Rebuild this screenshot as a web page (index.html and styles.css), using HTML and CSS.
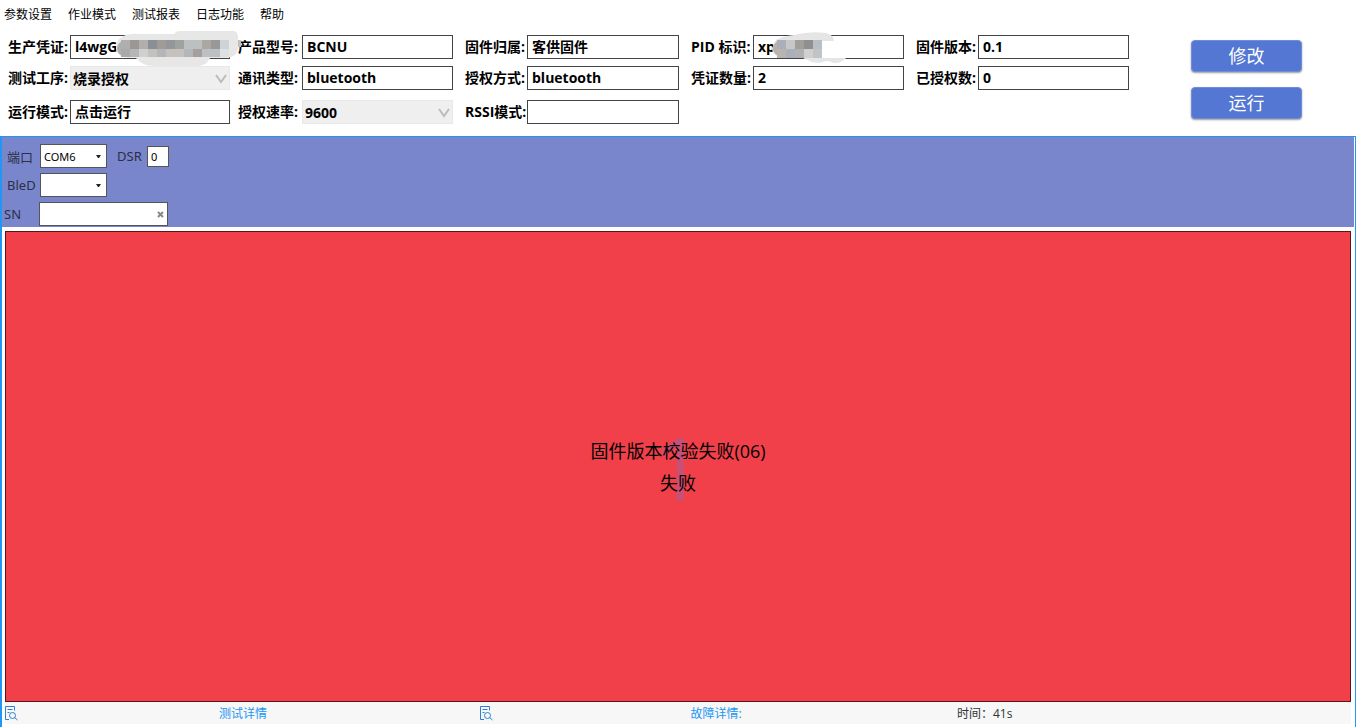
FILE: index.html
```html
<!DOCTYPE html>
<html lang="zh-CN">
<head>
  <meta charset="UTF-8">
  <title>烧录授权</title>
  <link rel="stylesheet" href="styles.css">
</head>
<body>
  <nav class="menu">
    <a href="#settings">参数设置</a>
    <a href="#mode">作业模式</a>
    <a href="#report">测试报表</a>
    <a href="#log">日志功能</a>
    <a href="#help">帮助</a>
  </nav>

  <header class="config">
    <div class="fields">
      <div class="field">
        <label for="token">生产凭证:</label>
        <div class="box">
          <input id="token" type="text" value="l4wgG">
          <svg class="mask mask-token" width="126" height="38" viewBox="0 0 126 38" aria-hidden="true">
            <path fill="#e7e7e7" d="M6 8Q12 4 24 5H58Q60 2 64 2H118Q122 3 122 8V18Q122 29 108 29H94Q90 37 82 37H38Q26 37 20 29H12Q0 27 0 19Q0 11 6 8Z"/>
            <path fill="#aeaeae" d="M14 11H8Q1 14 1 20Q2 28 14 28Z"/>
            <g shape-rendering="crispEdges">
              <path fill="#b0afae" d="M5 11h9v9H5zM23 11h9v9h-9z"/>
              <path fill="#999896" d="M14 11h9v9h-9zM95 11h9v9h-9z"/>
              <path fill="#8a8e96" d="M32 11h9v9h-9z"/>
              <path fill="#a19b97" d="M41 11h9v9h-9z"/>
              <path fill="#94969c" d="M50 11h9v9h-9z"/>
              <path fill="#a0a29f" d="M59 11h9v9h-9z"/>
              <path fill="#bcc0c1" d="M68 11h9v9h-9zM77 11h9v9h-9z"/>
              <path fill="#a9a8a1" d="M86 11h9v9h-9z"/>
              <path fill="#cdd4d9" d="M104 11h9v9h-9z"/>
              <path fill="#aaa9a8" d="M5 20h9v8H5z"/>
              <path fill="#b4b6b9" d="M14 20h9v8h-9zM41 20h9v8h-9zM68 20h9v8h-9z"/>
              <path fill="#d0d1ce" d="M23 20h9v8h-9z"/>
              <path fill="#c5c2be" d="M32 20h9v8h-9zM50 20h18v8H50z"/>
              <path fill="#a59f9e" d="M77 20h9v8h-9z"/>
              <path fill="#bebfc2" d="M86 20h18v8H86z"/>
              <path fill="#dce1e2" d="M104 20h9v8h-9z"/>
              <path fill="#c3bfbe" d="M122 11h3v7h-3z"/>
            </g>
          </svg>
        </div>
      </div>
      <div class="field">
        <label for="model">产品型号:</label>
        <input id="model" type="text" value="BCNU">
      </div>
      <div class="field">
        <label for="owner">固件归属:</label>
        <input id="owner" type="text" value="客供固件">
      </div>
      <div class="field">
        <label for="pid">PID 标识:</label>
        <div class="box">
          <input id="pid" type="text" value="xp">
          <svg class="mask mask-pid" width="76" height="34" viewBox="0 0 76 34" aria-hidden="true">
            <path fill="#e5e5e5" d="M4 10Q10 6 22 5Q38 1 54 3Q62 5 62 11H50V28H74Q70 33 62 33Q58 31 54 31Q48 34 40 32L31 28H14Q0 26 0 18Z"/>
            <path fill="#b6b2ad" d="M14 10H7Q0 14 1 20Q4 28 14 28Z"/>
            <g shape-rendering="crispEdges">
              <path fill="#aaafba" d="M5 10h9v9H5zM14 19h9v9h-9z"/>
              <path fill="#c7c7c8" d="M14 10h9v9h-9z"/>
              <path fill="#a09f9d" d="M23 10h9v9h-9z"/>
              <path fill="#918f8d" d="M32 10h9v9h-9z"/>
              <path fill="#b9bfc4" d="M41 10h9v9h-9z"/>
              <path fill="#b8b5ae" d="M5 19h9v9H5z"/>
              <path fill="#b1b1b2" d="M23 19h9v9h-9z"/>
              <path fill="#d2d0ce" d="M32 19h9v9h-9z"/>
              <path fill="#c0c4c6" d="M41 19h9v9h-9z"/>
            </g>
          </svg>
        </div>
      </div>
      <div class="field">
        <label for="version">固件版本:</label>
        <input id="version" type="text" value="0.1">
      </div>

      <div class="field">
        <label for="process">测试工序:</label>
        <div class="box">
          <select id="process"><option>烧录授权</option></select>
          <svg class="chevron" width="12" height="10" viewBox="0 0 12 10" aria-hidden="true"><path d="M1 1L6 8L11 1"/></svg>
        </div>
      </div>
      <div class="field">
        <label for="comm">通讯类型:</label>
        <input id="comm" type="text" value="bluetooth">
      </div>
      <div class="field">
        <label for="auth">授权方式:</label>
        <input id="auth" type="text" value="bluetooth">
      </div>
      <div class="field">
        <label for="count">凭证数量:</label>
        <input id="count" type="text" value="2">
      </div>
      <div class="field">
        <label for="used">已授权数:</label>
        <input id="used" type="text" value="0">
      </div>

      <div class="field">
        <label for="run">运行模式:</label>
        <input id="run" type="text" value="点击运行">
      </div>
      <div class="field">
        <label for="baud">授权速率:</label>
        <div class="box">
          <select id="baud"><option>9600</option></select>
          <svg class="chevron" width="12" height="10" viewBox="0 0 12 10" aria-hidden="true"><path d="M1 1L6 8L11 1"/></svg>
        </div>
      </div>
      <div class="field">
        <label for="rssi">RSSI模式:</label>
        <input id="rssi" type="text">
      </div>
    </div>
    <div class="actions">
      <button type="button">修改</button>
      <button type="button">运行</button>
    </div>
  </header>

  <main class="station">
    <div class="port-bar">
      <div class="port-row">
        <label for="port">端口</label>
        <div class="combo">
          <select id="port"><option>COM6</option></select>
          <svg class="caret" width="5" height="4" viewBox="0 0 5 4" aria-hidden="true"><path d="M0 0H5L3 3H2Z"/></svg>
        </div>
        <label class="dsr-label" for="dsr">DSR</label>
        <input class="dsr" id="dsr" type="text" value="0">
      </div>
      <div class="port-row">
        <label for="ble">BleD</label>
        <div class="combo">
          <select id="ble"><option></option></select>
          <svg class="caret" width="5" height="4" viewBox="0 0 5 4" aria-hidden="true"><path d="M0 0H5L3 3H2Z"/></svg>
        </div>
      </div>
      <div class="port-row sn-row">
        <label for="sn">SN</label>
        <div class="sn">
          <input id="sn" type="text">
          <button type="button" aria-label="清除">
            <svg width="7" height="7" viewBox="0 0 7 7" aria-hidden="true"><path d="M1 1L6 6M6 1L1 6"/></svg>
          </button>
        </div>
      </div>
    </div>

    <section class="result">
      <span class="number">1</span>
      <p>固件版本校验失败(06)</p>
      <p>失败</p>
    </section>

    <footer class="status">
      <svg class="doc" width="13" height="15" viewBox="0 0 13 15" aria-hidden="true">
        <path d="M4 13.500H.5V.5H9.500V4.500M2.500 3.500H7.500M2.500 6.500H4.500"/>
        <circle cx="7.500" cy="9.500" r="3"/>
        <path d="M9.500 11.500L12.500 14"/>
      </svg>
      <a href="#detail">测试详情</a>
      <svg class="doc" width="13" height="15" viewBox="0 0 13 15" aria-hidden="true">
        <path d="M4 13.500H.5V.5H9.500V4.500M2.500 3.500H7.500M2.500 6.500H4.500"/>
        <circle cx="7.500" cy="9.500" r="3"/>
        <path d="M9.500 11.500L12.500 14"/>
      </svg>
      <a href="#fault">故障详情:</a>
      <span class="time">时间：41s</span>
    </footer>
  </main>
</body>
</html>
```
FILE: styles.css
```css
:root {
  --frame: #2196f3;
  --bar: #7986cb;
  --button: #5377d2;
  --fail: #f2404b;
  --line: #444;
}

* {
  box-sizing: border-box;
}

html, body {
  height: 100%;
  margin: 0;
}

body {
  display: flex;
  flex-direction: column;
  background: #fff;
  color: #000;
  font-family: "Open Sans", "Noto Sans CJK SC", sans-serif;
  font-size: 12px;
  overflow: hidden;
}

input, select, button {
  font: inherit;
  color: inherit;
  margin: 0;
  border-radius: 0;
}

select {
  appearance: none;
}

a {
  text-decoration: none;
}

svg {
  display: block;
  fill: none;
}

/* menu */
.menu {
  display: flex;
  gap: 16px;
  padding: 5px 4px 0;
  line-height: 20px;
}

.menu a {
  color: #000;
}

/* settings */
.config {
  display: flex;
  gap: 62px;
  padding: 10px 54px 12px 8px;
}

.fields {
  flex: 1;
  display: grid;
  grid-template-columns: 230fr 227fr 226fr 225fr 213fr;
  grid-template-rows: 31px 34px 24px;
  font-size: 14px;
  font-weight: bold;
}

.field {
  display: flex;
  height: 24px;
  padding-right: 12px;
  line-height: 24px;
}

.field:nth-child(5n + 1) {
  padding-right: 8px;
}

.field:nth-child(5n) {
  padding-right: 0;
}

.field label {
  flex: 0 0 62px;
  font-size: 14px;
  white-space: nowrap;
}

.field:nth-child(5n + 2) label {
  flex-basis: 64px;
}

.box {
  position: relative;
  flex: 1;
  min-width: 0;
}

.field input,
.field select {
  flex: 1;
  width: 100%;
  min-width: 0;
  height: 24px;
  padding: 0 4px;
  border: 1px solid var(--line);
  background: #fff;
}

.field select {
  padding: 0 2px;
  border-color: #e8e8e8;
  background: #efefef;
}

.chevron {
  position: absolute;
  right: 3px;
  top: 8px;
  stroke: #bcbcbc;
  stroke-width: 2;
  pointer-events: none;
}

.mask {
  position: absolute;
  z-index: 1;
  pointer-events: none;
}

.mask-token {
  left: 46px;
  top: -6px;
}

.mask-pid {
  left: 19px;
  top: -5px;
}

.actions {
  display: flex;
  flex-direction: column;
  gap: 15px;
  padding-top: 5px;
}

.actions button {
  width: 111px;
  height: 32px;
  padding: 0;
  border: 1px solid #6f8dd8;
  border-radius: 4px;
  background: var(--button);
  box-shadow: 0 1px 2px rgba(0, 0, 0, 0.4);
  color: #fff;
  font-size: 18px;
  line-height: 30px;
}

/* station panel */
.station {
  flex: 1;
  display: flex;
  flex-direction: column;
  min-height: 0;
  padding-bottom: 3px;
  border: solid var(--frame);
  border-width: 1px 1px 0 2px;
}

.port-bar {
  display: flex;
  flex-direction: column;
  gap: 5px;
  margin-right: 1px;
  padding: 7px 0 1px 5px;
  background: var(--bar);
}

.port-row {
  display: flex;
  align-items: center;
  color: #2c2f45;
  font-family: "Noto Sans", "Noto Sans CJK SC", sans-serif;
  font-size: 13px;
}

.port-row label {
  width: 33px;
}

.port-row .dsr-label {
  width: 30px;
  margin-left: 10px;
}

.port-row input,
.port-row select {
  border: 1px solid #555;
  background: #fff;
  color: #000;
  font-size: 11px;
}

.combo {
  position: relative;
  width: 67px;
}

.combo select {
  display: block;
  width: 100%;
  height: 24px;
  padding: 0 3px;
}

.caret {
  position: absolute;
  right: 6px;
  top: 11px;
  fill: #222;
  pointer-events: none;
}

.port-row .dsr {
  width: 22px;
  height: 21px;
  padding: 0 3px;
}

.sn-row {
  margin-left: -3px;
}

.sn-row label {
  width: 35px;
}

.sn {
  position: relative;
  width: 129px;
}

.sn input {
  display: block;
  width: 100%;
  height: 24px;
  padding: 0 16px 0 3px;
}

.sn button {
  position: absolute;
  right: 0;
  top: 5px;
  padding: 4px;
  border: 0;
  background: none;
}

.sn path {
  stroke: #888;
  stroke-width: 2;
}

/* test result */
.result {
  position: relative;
  flex: 1;
  display: flex;
  flex-direction: column;
  align-items: center;
  justify-content: center;
  margin: 4px 4px 0 3px;
  border: 1px solid #5a141c;
  background: var(--fail);
  font-size: 18px;
}

.result p {
  position: relative;
  margin: 0;
  line-height: 32px;
}

/* station number, shown behind the result */
.number {
  position: absolute;
  inset: 0;
  display: flex;
  align-items: center;
  justify-content: center;
  color: rgba(121, 112, 203, 0.35);
  font-size: 88px;
  line-height: 1;
}

/* bottom line */
.status {
  display: grid;
  grid-template-columns: 13px 462fr 13px 458fr 400fr;
  align-items: center;
  height: 22px;
  margin: 0 4px 0 3px;
  background: #f7f7f7;
}

.status a {
  padding-right: 12px;
  color: var(--frame);
  text-align: center;
}

.doc {
  stroke: #2b7fd8;
}

.time {
  padding-left: 6px;
  color: #333;
}
```
